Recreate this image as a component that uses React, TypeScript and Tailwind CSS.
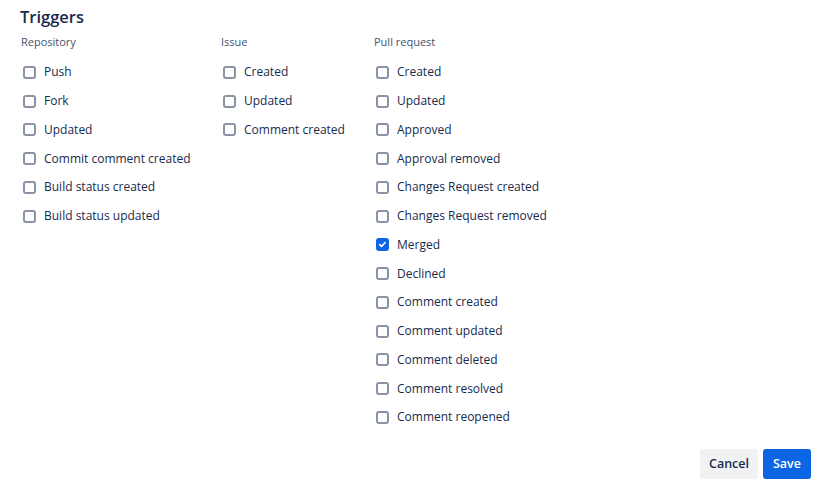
import React, { useState } from 'react';

type Group = { title: string; width: string; items: string[] };

const groups: Group[] = [
    {
        title: 'Repository',
        width: 'w-[200px]',
        items: ['Push', 'Fork', 'Updated', 'Commit comment created', 'Build status created', 'Build status updated'],
    },
    {
        title: 'Issue',
        width: 'w-[153px]',
        items: ['Created', 'Updated', 'Comment created'],
    },
    {
        title: 'Pull request',
        width: 'w-[200px]',
        items: [
            'Created',
            'Updated',
            'Approved',
            'Approval removed',
            'Changes Request created',
            'Changes Request removed',
            'Merged',
            'Declined',
            'Comment created',
            'Comment updated',
            'Comment deleted',
            'Comment resolved',
            'Comment reopened',
        ],
    },
];

function Check({ checked, onClick }: { checked: boolean; onClick: () => void }) {
    return (
        <button
            onClick={onClick}
            className={
                checked
                    ? 'w-[13px] h-[13px] rounded-[3px] bg-[#0C66E4] flex items-center justify-center flex-shrink-0'
                    : 'w-[13px] h-[13px] rounded-[3px] border-2 border-[#8993A4] bg-white flex-shrink-0'
            }
        >
            {checked && (
                <svg width="9" height="9" viewBox="0 0 10 10" fill="none">
                    <path d="M2 5.2l2 2 4-4.4" stroke="white" strokeWidth="1.8" strokeLinecap="round" strokeLinejoin="round" />
                </svg>
            )}
        </button>
    );
}

export default function App() {
    const [checked, setChecked] = useState<Record<string, boolean>>({ 'Pull request-Merged': true });

    return (
        <div
            className="w-[831px] h-[494px] bg-white text-[#172B4D] flex flex-col px-5 pt-[5px] pb-[15px]"
            style={{ fontFamily: '"Open Sans", "Noto Sans", sans-serif' }}
        >
            <h1 className="text-[16.5px] font-semibold leading-6 text-[#172B4D]">Triggers</h1>
            <div className="flex mt-[5px] pl-px">
                {groups.map((g) => (
                    <div key={g.title} className={g.width}>
                        <p className="text-[11px] leading-4 text-[#44546F] h-4">{g.title}</p>
                        <div className="flex flex-col mt-[8px]">
                            {g.items.map((item) => {
                                const key = `${g.title}-${item}`;
                                const on = !!checked[key];
                                return (
                                    <label key={key} className="flex items-center gap-[8px] h-[28.75px] pl-[2px] cursor-pointer">
                                        <Check checked={on} onClick={() => setChecked((p) => ({ ...p, [key]: !on }))} />
                                        <span className="text-[12px] text-[#172B4D] whitespace-nowrap">{item}</span>
                                    </label>
                                );
                            })}
                        </div>
                    </div>
                ))}
            </div>
            <div className="flex-1" />
            <div className="flex justify-end gap-[5px]">
                <button className="h-[30px] w-[58px] rounded-[3px] bg-[#F1F2F4] text-[12.5px] font-semibold text-[#172B4D]">
                    Cancel
                </button>
                <button className="h-[30px] w-[48px] rounded-[3px] bg-[#0C66E4] text-[12.5px] font-semibold text-white">
                    Save
                </button>
            </div>
        </div>
    );
}
